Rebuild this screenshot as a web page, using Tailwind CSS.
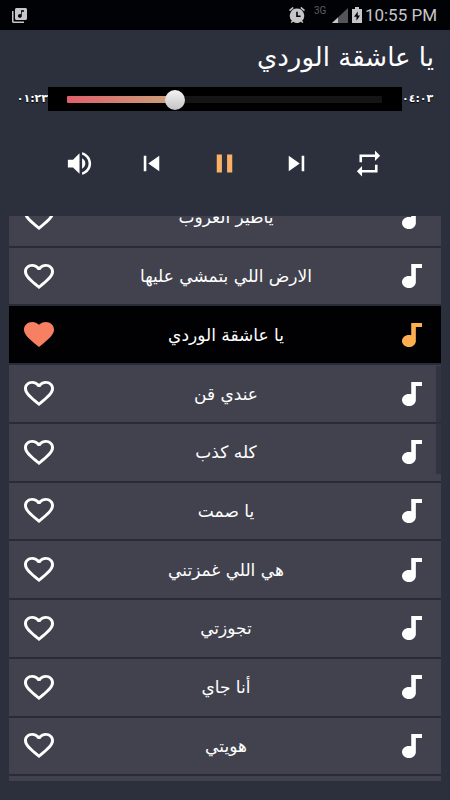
<!DOCTYPE html>
<html lang="ar">
<head>
<meta charset="utf-8">
<meta name="viewport" content="width=device-width, initial-scale=1">
<title>يا عاشقة الوردي</title>
<script src="https://cdn.jsdelivr.net/npm/@tailwindcss/browser@4"></script>
</head>
<body class="bg-[#2b303c] text-white font-['DejaVu_Sans',sans-serif]">
<svg class="hidden" aria-hidden="true">
  <symbol id="heart" viewBox="2 3 20 18.35" preserveAspectRatio="none"><path d="M16.5 3c-1.74 0-3.41.81-4.5 2.09C10.91 3.81 9.24 3 7.5 3 4.42 3 2 5.42 2 8.5c0 3.78 3.4 6.86 8.55 11.54L12 21.35l1.45-1.32C18.6 15.36 22 12.28 22 8.5 22 5.42 19.58 3 16.5 3zm-4.4 15.55l-.1.1-.1-.1C7.14 14.24 4 11.39 4 8.5 4 6.5 5.5 5 7.5 5c1.54 0 3.04.99 3.57 2.36h1.87C13.46 5.99 14.96 5 16.5 5c2 0 3.5 1.5 3.5 3.5 0 2.89-3.14 5.74-7.9 10.05z"/></symbol>
  <symbol id="heart-full" viewBox="2 3 20 18.35" preserveAspectRatio="none"><path d="M12 21.35l-1.45-1.32C5.4 15.36 2 12.28 2 8.5 2 5.42 4.42 3 7.5 3c1.74 0 3.41.81 4.5 2.09C13.09 3.81 14.76 3 16.5 3 19.58 3 22 5.42 22 8.5c0 3.78-3.4 6.86-8.55 11.54L12 21.35z"/></symbol>
  <symbol id="note" viewBox="6 3 13 18" preserveAspectRatio="none"><path d="M12 3v9.28c-.47-.17-.97-.28-1.5-.28C8.01 12 6 14.01 6 16.5S8.01 21 10.5 21c2.31 0 4.2-1.75 4.45-4H15V6h4V3h-7z"/></symbol>
</svg>
<div class="flex h-screen flex-col overflow-hidden">
  <div class="flex h-[30px] shrink-0 items-center bg-[#010206] pl-3 pr-[13px] text-[#c6c6c8]">
    <svg class="size-[15px]" viewBox="2 2 20 20" fill="currentColor"><path d="M20 2H8c-1.1 0-2 .9-2 2v12c0 1.1.9 2 2 2h12c1.1 0 2-.9 2-2V4c0-1.1-.9-2-2-2zm-2 5h-3v5.5c0 1.38-1.12 2.5-2.5 2.5S10 13.88 10 12.500s1.120-2.500 2.500-2.500c.57 0 1.080.19 1.500.51V5h4v2zM4 6H2v14c0 1.100.9 2 2 2h14v-2H4V6z"/></svg>
    <svg class="ml-auto size-4" viewBox="2 2 20 20" fill="currentColor"><path d="M22 5.700l-4.600-3.900-1.300 1.500 4.600 3.900L22 5.700zM7.900 3.400L6.600 1.900 2 5.700l1.300 1.500 4.600-3.800zM12 4a9 9 0 0 0-6.400 15.300L4 21l1.300 1 1.800-1.500a9 9 0 0 0 9.800 0l1.800 1.500L20 21l-1.600-1.700A9 9 0 0 0 12 4zm4.500 10.500H11V8h2v4.700h3.500z"/></svg>
    <span class="ml-[9px] mb-2 w-[14px] font-[Roboto,sans-serif] text-[10px] leading-3 text-[#5c5d62]">3G</span>
    <svg class="ml-1 h-[15px] w-4" viewBox="0 0 16 15"><path d="M16 0V15H0z" fill="#54555a"/><path d="M6 9.400V15H0z" fill="#c6c6c8"/></svg>
    <svg class="ml-1 h-4 w-[10px]" viewBox="0 0 10 16" fill="currentColor"><path fill-rule="evenodd" d="M3 0h4v2h3v14H0V2h3zM5.800 4.500L2 9.700h2.500v4L8 8.500H5.700z"/></svg>
    <span class="ml-[3px] whitespace-nowrap font-[Roboto,sans-serif] text-[17px] leading-6">10:55 PM</span>
  </div>

  <header class="shrink-0">
    <h1 dir="rtl" class="h-[57px] px-4 text-[26px] leading-[54px]">يا عاشقة الوردي</h1>
    <div class="flex h-6 items-center">
      <span class="w-12 text-right text-[11px] font-bold leading-6 [text-shadow:0_1px_1px_#000]">٠١:٢٣</span>
      <div class="flex h-6 flex-1 items-center bg-black pl-[19px] pr-5">
        <input type="range" aria-label="موضع التشغيل" min="0" max="1000" value="332" class="h-5 w-full appearance-none bg-transparent [&::-webkit-slider-runnable-track]:h-[7px] [&::-webkit-slider-runnable-track]:rounded-[1px] [&::-webkit-slider-runnable-track]:bg-[linear-gradient(90deg,#e0606b_0%,#c8a27a_34%,#151515_34%,#151515_100%)] [&::-webkit-slider-thumb]:-mt-[6px] [&::-webkit-slider-thumb]:size-5 [&::-webkit-slider-thumb]:appearance-none [&::-webkit-slider-thumb]:rounded-full [&::-webkit-slider-thumb]:bg-linear-to-b [&::-webkit-slider-thumb]:from-[#f4f4f4] [&::-webkit-slider-thumb]:to-[#c4c4c4]">
      </div>
      <span class="w-12 text-left text-[11px] font-bold leading-6 [text-shadow:0_1px_1px_#000]">٠٤:٠٣</span>
    </div>
    <div class="flex h-[105px] items-center pl-[43px] pr-[45px] *:flex *:flex-1 *:justify-center">
      <button aria-label="الصوت"><svg class="size-[31px]" viewBox="0 0 24 24" fill="currentColor"><path d="M3 9v6h4l5 5V4L7 9H3zm13.500 3c0-1.770-1.020-3.290-2.500-4.030v8.050c1.480-.73 2.500-2.250 2.500-4.020zM14 3.230v2.060c2.890.86 5 3.540 5 6.710s-2.110 5.850-5 6.710v2.060c4.010-.91 7-4.490 7-8.770s-2.990-7.860-7-8.770z"/></svg></button>
      <button aria-label="السابق"><svg class="size-[31px]" viewBox="0 0 24 24" fill="currentColor"><path d="M6 6h2v12H6zm3.500 6l8.500 6V6z"/></svg></button>
      <button aria-label="إيقاف مؤقت" class="text-[#fbb067]"><svg class="size-[31px]" viewBox="0 0 24 24" fill="currentColor"><path d="M6 19h4V5H6v14zm8-14v14h4V5h-4z"/></svg></button>
      <button aria-label="التالي"><svg class="size-[31px]" viewBox="0 0 24 24" fill="currentColor"><path d="M6 18l8.500-6L6 6v12zM16 6v12h2V6h-2z"/></svg></button>
      <button aria-label="تكرار"><svg class="size-[31px]" viewBox="0 0 24 24" fill="currentColor"><path d="M7 7h10v3l4-4-4-4v3H5v6h2V7zm10 10H7v-3l-4 4 4 4v-3h12v-6h-2v4z"/></svg></button>
    </div>
  </header>

  <main class="relative mx-[9px] mb-[19px] min-h-0 flex-1 overflow-hidden">
    <ul class="-mt-[27px] grid h-[644px] auto-rows-fr gap-[2px] text-[17px] leading-8 *:flex *:items-center *:bg-[#41424d] *:pl-[15px] *:pr-[19px] *:shadow-[0_0_2px_#262a35]">
      <li><button aria-label="تفضيل"><svg class="h-[25px] w-[30px]" fill="currentColor"><use href="#heart"/></svg></button><a href="#" dir="rtl" class="flex-1 pr-1 text-center">ياطير الغروب</a><svg class="h-6 w-5" fill="currentColor"><use href="#note"/></svg></li>
      <li><button aria-label="تفضيل"><svg class="h-[25px] w-[30px]" fill="currentColor"><use href="#heart"/></svg></button><a href="#" dir="rtl" class="flex-1 pr-1 text-center">الارض اللي بتمشي عليها</a><svg class="h-6 w-5" fill="currentColor"><use href="#note"/></svg></li>
      <li class="bg-[#010103]!"><button aria-label="إزالة التفضيل" class="text-[#f88062]"><svg class="h-[25px] w-[30px]" fill="currentColor"><use href="#heart-full"/></svg></button><a href="#" dir="rtl" aria-current="true" class="flex-1 pr-1 text-center">يا عاشقة الوردي</a><svg class="h-6 w-5 text-[#fdae51]" fill="currentColor"><use href="#note"/></svg></li>
      <li><button aria-label="تفضيل"><svg class="h-[25px] w-[30px]" fill="currentColor"><use href="#heart"/></svg></button><a href="#" dir="rtl" class="flex-1 pr-1 text-center">عندي قن</a><svg class="h-6 w-5" fill="currentColor"><use href="#note"/></svg></li>
      <li><button aria-label="تفضيل"><svg class="h-[25px] w-[30px]" fill="currentColor"><use href="#heart"/></svg></button><a href="#" dir="rtl" class="flex-1 pr-1 text-center">كله كذب</a><svg class="h-6 w-5" fill="currentColor"><use href="#note"/></svg></li>
      <li><button aria-label="تفضيل"><svg class="h-[25px] w-[30px]" fill="currentColor"><use href="#heart"/></svg></button><a href="#" dir="rtl" class="flex-1 pr-1 text-center">يا صمت</a><svg class="h-6 w-5" fill="currentColor"><use href="#note"/></svg></li>
      <li><button aria-label="تفضيل"><svg class="h-[25px] w-[30px]" fill="currentColor"><use href="#heart"/></svg></button><a href="#" dir="rtl" class="flex-1 pr-1 text-center">هي اللي غمزتني</a><svg class="h-6 w-5" fill="currentColor"><use href="#note"/></svg></li>
      <li><button aria-label="تفضيل"><svg class="h-[25px] w-[30px]" fill="currentColor"><use href="#heart"/></svg></button><a href="#" dir="rtl" class="flex-1 pr-1 text-center">تجوزتي</a><svg class="h-6 w-5" fill="currentColor"><use href="#note"/></svg></li>
      <li><button aria-label="تفضيل"><svg class="h-[25px] w-[30px]" fill="currentColor"><use href="#heart"/></svg></button><a href="#" dir="rtl" class="flex-1 pr-1 text-center">أنا جاي</a><svg class="h-6 w-5" fill="currentColor"><use href="#note"/></svg></li>
      <li><button aria-label="تفضيل"><svg class="h-[25px] w-[30px]" fill="currentColor"><use href="#heart"/></svg></button><a href="#" dir="rtl" class="flex-1 pr-1 text-center">هويتي</a><svg class="h-6 w-5" fill="currentColor"><use href="#note"/></svg></li>
      <li></li>
    </ul>
    <div class="absolute right-0 top-[150px] h-[108px] w-[5px] bg-[#2c303c]/70"></div>
  </main>
</div>
</body>
</html>
